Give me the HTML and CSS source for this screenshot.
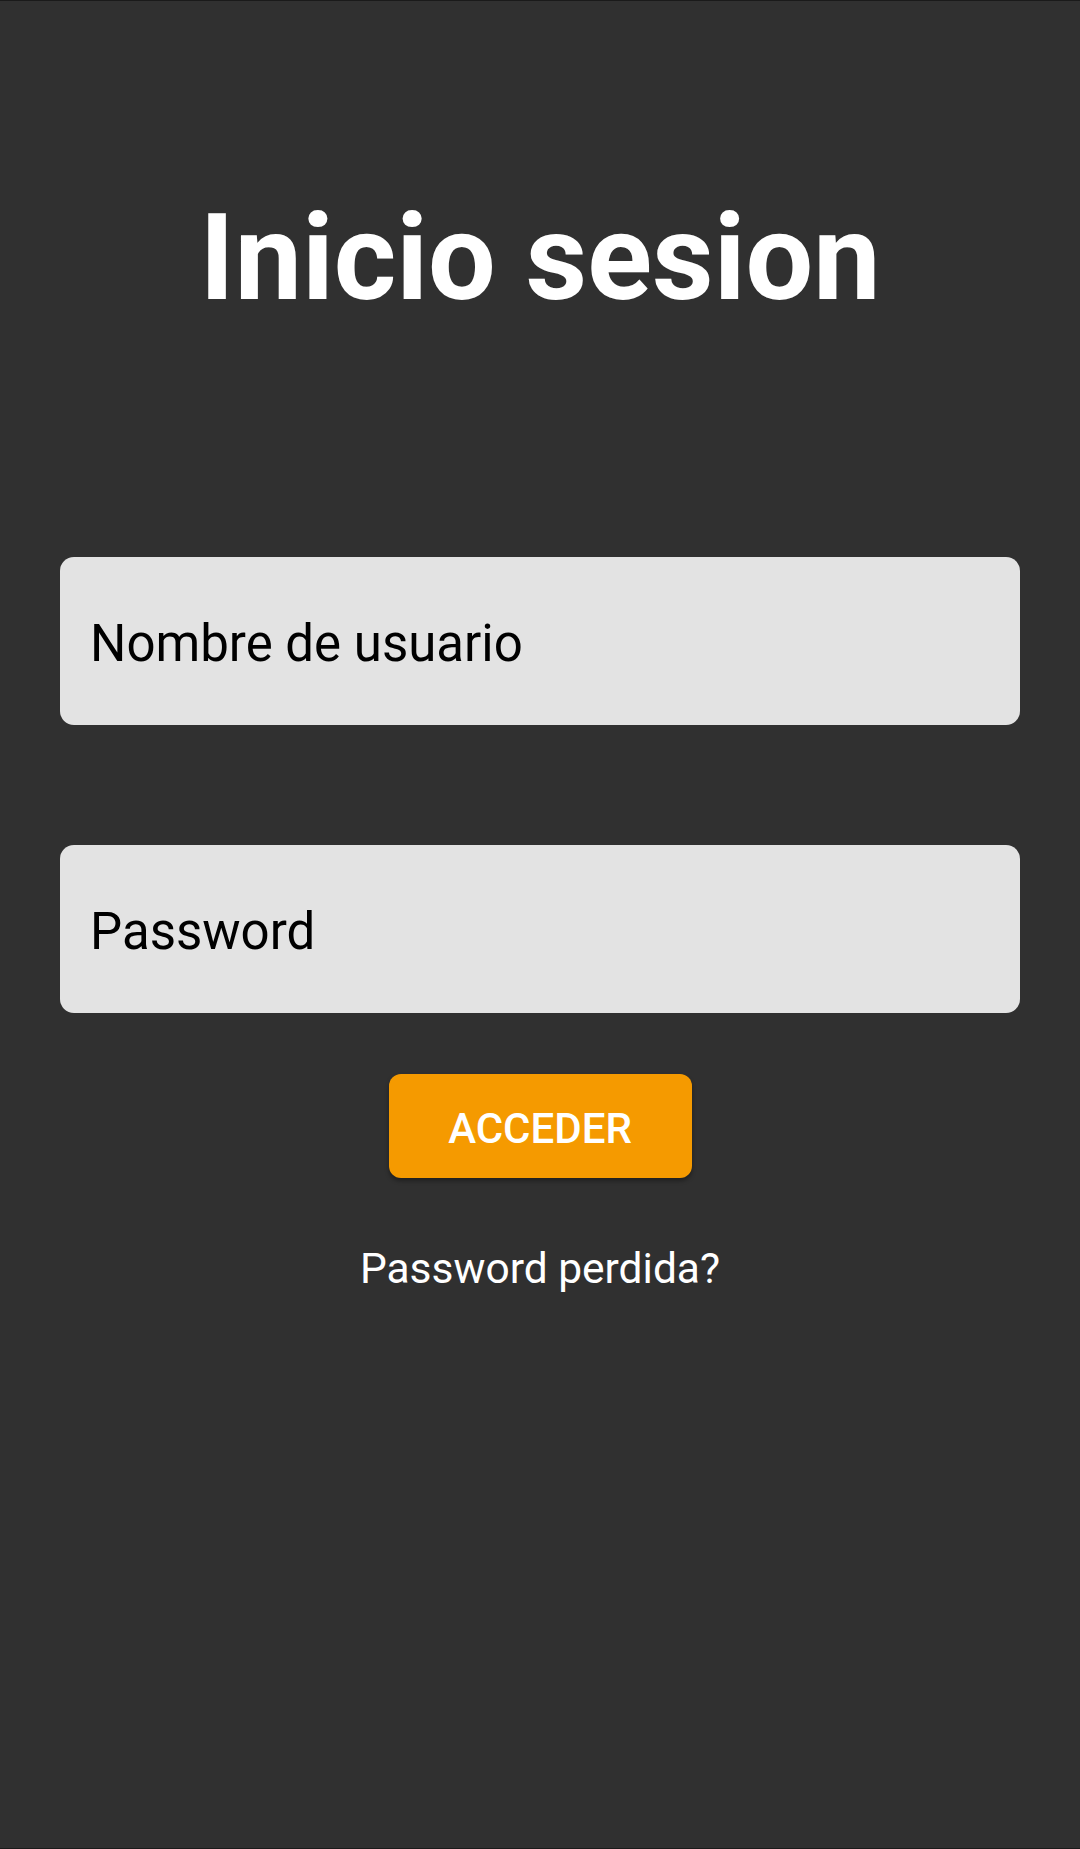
FILE: index.html
```html
<!DOCTYPE html>
<html lang="es">
<head>
<meta charset="utf-8">
<title>Inicio sesion</title>
<link rel="stylesheet" href="styles.css">
</head>
<body>
<main class="screen">
  <h1 class="title">Inicio sesion</h1>
  <form class="form">
    <div class="field"><span class="placeholder">Nombre de usuario</span></div>
    <div class="field field-second"><span class="placeholder">Password</span></div>
    <button type="button" class="btn">ACCEDER</button>
    <a class="lost" href="#">Password perdida?</a>
  </form>
</main>
</body>
</html>
```
FILE: styles.css
```css
html, body {
  margin: 0;
  padding: 0;
  background: #303030;
}
.screen {
  box-sizing: border-box;
  width: 1080px;
  height: 1849px;
  border-top: 1px solid #1a1a1a;
  border-bottom: 1px solid #1a1a1a;
  background: #303030;
  display: flex;
  flex-direction: column;
  align-items: center;
  font-family: Roboto, "Noto Sans", sans-serif;
}
.title {
  margin: 187px 0 0 0;
  font-size: 120px;
  line-height: 140px;
  font-weight: 700;
  color: #ffffff;
  letter-spacing: 0;
}
.form {
  display: flex;
  flex-direction: column;
  align-items: center;
  width: 960px;
  margin-top: 229px;
}
.field {
  box-sizing: border-box;
  width: 960px;
  height: 168px;
  background: #e3e3e3;
  border-radius: 14px;
  display: flex;
  align-items: center;
  padding-left: 30px;
  padding-top: 5px;
}
.field-second {
  margin-top: 120px;
}
.placeholder {
  font-size: 51px;
  color: #000000;
}
.btn {
  margin-top: 61px;
  width: 303px;
  height: 104px;
  padding: 4px 0 0 0;
  border: none;
  border-radius: 12px;
  background: #f59a00;
  color: #ffffff;
  font-family: Roboto, "Noto Sans", sans-serif;
  font-weight: 500;
  font-size: 42px;
  box-shadow: 0 3px 4px rgba(0, 0, 0, 0.35);
}
.lost {
  margin-top: 66px;
  font-size: 42.5px;
  color: #ffffff;
  text-decoration: none;
}
```
